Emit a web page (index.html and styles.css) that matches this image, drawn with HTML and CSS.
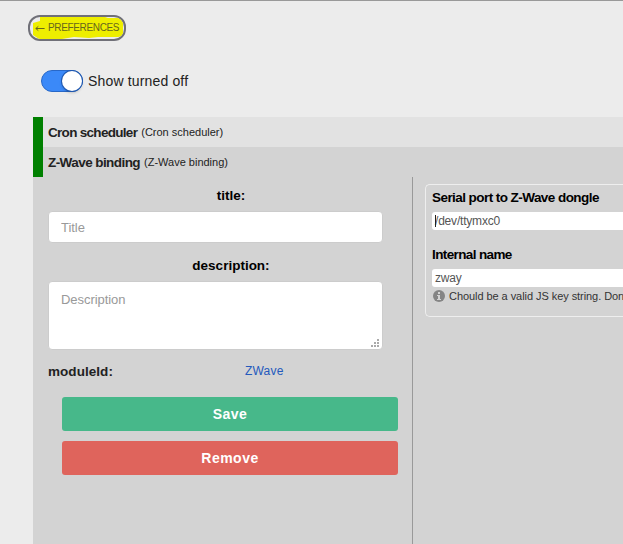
FILE: index.html
```html
<!DOCTYPE html>
<html lang="en">
<head>
<meta charset="utf-8">
<title>Preferences</title>
<link rel="stylesheet" href="styles.css">
</head>
<body>
<header class="topbar">
  <a class="back">
    <svg class="marker" viewBox="0 0 98 26" aria-hidden="true"><path d="M12 1 Q24-.5 39 2H77L80 3H92L95 7V21L90 22H70L61 23 46 22 34 24H11L5 20V8L12 6Z" fill="#eeee00"/></svg>
    <svg class="arrow" viewBox="0 0 10 7" aria-hidden="true"><path d="M.8 3.5H9.6M3.3 1.4L.8 3.5l2.5 2.1" fill="none" stroke="#66661c"/></svg>
    <span class="back-label">PREFERENCES</span>
  </a>
</header>
<label class="switch-row"><span class="switch"><span class="knob"></span></span><span class="switch-label">Show turned off</span></label>
<main class="modules">
  <div class="module"><b class="name cron">Cron scheduler</b><span class="sub">(Cron scheduler)</span></div>
  <div class="module active"><b class="name binding">Z-Wave binding</b><span class="sub">(Z-Wave binding)</span></div>
  <div class="details">
    <form class="general">
      <label class="label title-label">title:</label>
      <input class="field" placeholder="Title">
      <label class="label desc-label">description:</label>
      <div class="area-wrap">
        <textarea class="field area" placeholder="Description"></textarea>
        <svg class="grip" viewBox="0 0 8 8" aria-hidden="true"><path d="M6 0h2v2H6zM3 3h2v2H3zM6 3h2v2H6zM0 6h2v2H0zM3 6h2v2H3zM6 6h2v2H6z" fill="#aaa"/></svg>
      </div>
      <div class="meta"><b class="meta-key">moduleId:</b><a class="meta-link">ZWave</a></div>
      <div class="actions">
        <button type="button" class="btn save">Save</button>
        <button type="button" class="btn remove">Remove</button>
      </div>
    </form>
    <section class="settings">
      <div class="group">
        <b class="caption port">Serial port to Z-Wave dongle</b>
        <div class="value"><span class="caret"></span>/dev/ttymxc0</div>
        <b class="caption internal">Internal name</b>
        <div class="value">zway</div>
        <p class="hint"><svg class="info" viewBox="0 0 12 12" aria-hidden="true"><circle cx="6" cy="6" r="6" fill="#858585"/><path d="M5 2h2v2H5zM4 5h3v4h1v1H4V9h1V6H4z" fill="#d3d3d3"/></svg><span>Chould be a valid JS key string. Don</span></p>
      </div>
    </section>
  </div>
</main>
</body>
</html>
```
FILE: styles.css
```css
* { box-sizing: border-box; }
body {
  margin: 0;
  height: 544px;
  overflow: hidden;
  display: flex;
  flex-direction: column;
  border-top: 1px solid #999;
  background: #ececec;
  color: #222;
  font-family: "Liberation Sans", Arial, sans-serif;
}
.topbar { height: 69px; padding: 14px 0 0 28px; flex: none; }
.back {
  position: relative;
  display: flex;
  align-items: center;
  width: 98px;
  height: 26px;
  padding-left: 5px;
  border: 2px solid #707078;
  border-radius: 12px;
  overflow: hidden;
  font-size: 10px;
  color: #66661c;
}
.marker { position: absolute; left: -2px; top: -2px; width: 98px; height: 26px; }
.arrow { position: relative; width: 10px; height: 7px; margin-right: 3px; }
.back-label { position: relative; letter-spacing: -.35px; line-height: 12px; }
.switch-row { display: flex; align-items: center; height: 22px; margin-left: 41px; flex: none; }
.switch {
  display: flex;
  justify-content: flex-end;
  width: 42px;
  height: 22px;
  margin-right: 5px;
  border: 1px solid #2868c8;
  border-radius: 11px;
  background: #3b89f8;
}
.knob {
  width: 20px;
  height: 20px;
  border-radius: 50%;
  background: #fff;
  box-shadow: 0 0 0 1px #1f58b0, 0 2px 3px rgba(0, 0, 0, .2);
}
.switch-label { font-size: 14px; letter-spacing: .16px; }
.modules { flex: 1; margin: 25px 0 0 33px; background: #d3d3d3; }
.module {
  display: flex;
  align-items: center;
  height: 30px;
  padding-left: 5px;
  border-left: 10px solid #008000;
  background: #e2e2e2;
  white-space: nowrap;
}
.module.active { background: #d3d3d3; }
.name { font-size: 13.5px; margin-right: 4px; }
.cron { letter-spacing: -.7px; }
.binding { letter-spacing: -.57px; }
.sub { font-size: 11px; }
.details { display: flex; height: 367px; }
.general { width: 380px; flex: none; padding: 10px 14px 0 15px; border-right: 1px solid #999; }
.label { display: block; width: 366px; height: 17px; line-height: 17px; font-size: 13.5px; font-weight: bold; color: #000; text-align: center; }
.field {
  display: block;
  width: 335px;
  height: 32px;
  padding: 0 12px;
  border: 1px solid #ccc;
  border-radius: 4px;
  background: #fff;
  font: 13px "Liberation Sans", Arial, sans-serif;
  letter-spacing: -.05px;
  outline: none;
}
.field::placeholder { color: #999; opacity: 1; }
.title-label { margin-bottom: 7px; }
.desc-label { margin: 14px 0 7px; }
.area-wrap { position: relative; width: 335px; }
.area { height: 69px; padding-top: 10px; resize: none; }
.grip { position: absolute; right: 4px; bottom: 3px; width: 8px; height: 8px; }
.meta { display: flex; height: 17px; margin-top: 13px; line-height: 17px; }
.meta-key { width: 197px; font-size: 13.5px; letter-spacing: .05px; }
.meta-link { font-size: 12px; letter-spacing: .2px; color: #2359bd; }
.actions { display: flex; flex-direction: column; gap: 10px; width: 336px; margin: 17px 0 0 14px; }
.btn {
  height: 34px;
  padding: 0;
  border: 0;
  border-radius: 3px;
  color: #fff;
  font: bold 14px "Liberation Sans", Arial, sans-serif;
  letter-spacing: .5px;
}
.save { background: #47b88a; }
.remove { background: #df645c; }
.settings { flex: 1; min-width: 0; overflow: hidden; padding: 7px 0 0 12px; }
.group { height: 133px; padding: 5px 0 0 6px; border: 1px solid #eee; border-right: 0; border-radius: 5px 0 0 5px; white-space: nowrap; }
.caption { display: block; height: 16px; line-height: 16px; font-size: 13.5px; color: #000; }
.port { margin-bottom: 6px; letter-spacing: -.56px; }
.internal { margin: 17px 0 6px; letter-spacing: -.62px; }
.value {
  position: relative;
  height: 18px;
  padding-left: 3px;
  border-radius: 3px 0 0 3px;
  background: #fff;
  color: #555;
  font-size: 12px;
  letter-spacing: -.2px;
  line-height: 18px;
}
.caret { position: absolute; left: 3px; top: 3px; width: 1px; height: 12px; background: #222; }
.hint { display: flex; align-items: center; height: 18px; margin: 0; font-size: 11px; letter-spacing: -.06px; color: #333; }
.info { flex: none; width: 12px; height: 12px; margin: 0 4px 0 1px; }
```
